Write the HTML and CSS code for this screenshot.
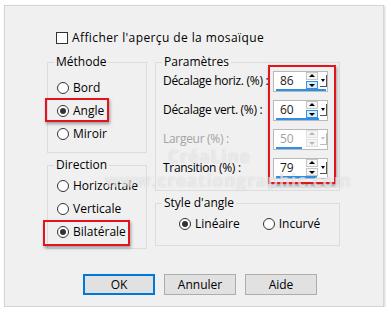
FILE: index.html
```html
<!DOCTYPE html>
<html lang="fr">
<head>
  <meta charset="UTF-8">
  <title>Mosaïque - Angle</title>
  <link rel="stylesheet" href="styles.css">
</head>
<body>
  <div class="dialog">
    <div class="preview">
      <span class="check"></span>
      <span class="preview-text">Afficher l'aperçu de la mosaïque</span>
    </div>

    <div class="columns">
      <div class="col">
        <fieldset class="group">
          <legend>Méthode</legend>
          <div class="body method">
            <div class="radio"><span class="dot"></span>Bord</div>
            <div class="radio on mark"><span class="dot"></span>Angle</div>
            <div class="radio"><span class="dot"></span>Miroir</div>
          </div>
        </fieldset>
        <fieldset class="group">
          <legend>Direction</legend>
          <div class="body direction">
            <div class="radio"><span class="dot"></span>Horizontale</div>
            <div class="radio"><span class="dot"></span>Verticale</div>
            <div class="radio on mark wide"><span class="dot"></span>Bilatérale</div>
          </div>
        </fieldset>
      </div>

      <div class="col">
        <fieldset class="group">
          <legend>Paramètres</legend>
          <div class="body params">
            <div class="labels">
              <div class="lbl">Décalage horiz. (%) :</div>
              <div class="lbl">Décalage vert. (%) :</div>
              <div class="lbl off">Largeur (%) :</div>
              <div class="lbl">Transition (%) :</div>
            </div>
            <div class="spins mark-box">
              <div class="spin">
                <div class="spin-row"><span class="val">86</span><span class="arrows"><i class="up"></i><i class="down hot"></i></span><span class="drop"></span></div>
                <div class="bar" style="width: 50px"></div>
              </div>
              <div class="spin">
                <div class="spin-row"><span class="val">60</span><span class="arrows"><i class="up"></i><i class="down hot"></i></span><span class="drop"></span></div>
                <div class="bar" style="width: 43px"></div>
              </div>
              <div class="spin disabled">
                <div class="spin-row"><span class="val">50</span><span class="arrows"><i class="up"></i><i class="down"></i></span><span class="drop"></span></div>
                <div class="bar" style="width: 26px"></div>
              </div>
              <div class="spin">
                <div class="spin-row"><span class="val">79</span><span class="arrows"><i class="up"></i><i class="down"></i></span><span class="drop"></span></div>
                <div class="bar" style="width: 41px"></div>
              </div>
            </div>
          </div>
        </fieldset>
        <fieldset class="group">
          <legend>Style d'angle</legend>
          <div class="body style">
            <div class="radio on"><span class="dot"></span>Linéaire</div>
            <div class="radio"><span class="dot"></span>Incurvé</div>
          </div>
        </fieldset>
      </div>
    </div>

    <div class="buttons">
      <button class="default">OK</button>
      <button>Annuler</button>
      <button>Aide</button>
    </div>

    <div class="wm wm-name">CréaLine</div>
    <div class="wm wm-url">www.creationgraphic.com</div>
  </div>
</body>
</html>
```

FILE: styles.css
```css
body { margin: 0; background: #fff; font-family: "Open Sans", "Noto Sans", sans-serif; font-size: 12px; color: #000; }

.dialog { position: relative; width: 380px; height: 302px; margin: 5px 0 0 4px; padding-left: 42px; box-sizing: border-box; background: #f0f0f0; border: 1px solid #d4d4d4; box-shadow: 1px 1px 2px rgba(0,0,0,.18); overflow: hidden; }

.preview { display: flex; align-items: center; gap: 4px; height: 12px; margin: 26px 0 0 9px; line-height: 12px; }
.preview-text { letter-spacing: .4px; }
.check { width: 10px; height: 10px; border: 1px solid #333; background: #fff; }

.columns { display: grid; grid-template-columns: 100px 185px; column-gap: 8px; margin-top: 10px; }
.col { display: flex; flex-direction: column; gap: 4px; }

.group { margin: 0; padding: 0; border: 1px solid #dcdcdc; min-width: 0; }
.group legend { margin-left: 6px; padding: 0 2px; line-height: 16px; }

.radio { position: relative; display: flex; align-items: center; gap: 4px; height: 23px; }
.dot { position: relative; width: 10px; height: 10px; border: 1px solid #333; border-radius: 50%; background: #fff; }
.radio.on .dot::after { content: ""; position: absolute; left: 2px; top: 2px; width: 6px; height: 6px; border-radius: 50%; background: #333; }

.method { padding: 6px 0 7px 9px; }
.direction { padding: 1px 0 5px 9px; }

/* annotations */
.mark::before { content: ""; position: absolute; left: -12px; top: -1px; width: 60px; height: 20px; border: 2px solid #e3141b; box-shadow: 1px 2px 3px rgba(0,0,0,.35); }
.mark.wide::before { left: -14px; width: 83px; top: 0; height: 22px; }
.mark-box { position: relative; }
.mark-box::after { content: ""; position: absolute; left: -5px; top: -6px; right: -8px; bottom: -5px; border: 2px solid #e3141b; box-shadow: 1px 2px 3px rgba(0,0,0,.35); }

.params { display: flex; padding: 1px 0 11px 7px; }
.labels { width: 110px; display: flex; flex-direction: column; gap: 8px; }
.lbl { height: 21px; line-height: 19px; white-space: nowrap; letter-spacing: -.3px; }
.lbl.off { color: #a3a3a3; }

.spins { display: flex; flex-direction: column; gap: 8px; }
.spin { width: 53px; height: 19px; border: 1px solid #b9b9b9; background: #fff; display: flex; flex-direction: column; }
.spin-row { flex: 1; display: flex; align-items: center; }
.val { width: 31px; padding-left: 6px; color: #1a1a1a; }
.arrows { display: flex; flex-direction: column; gap: 1px; }
.arrows i { position: relative; display: block; width: 10px; height: 6px; border: 1px solid #c6c6c6; background: #f4f4f4; }
.arrows i::after { content: ""; position: absolute; left: 2px; border-left: 3px solid transparent; border-right: 3px solid transparent; }
.arrows .up::after { top: 1px; border-bottom: 3px solid #000; }
.arrows .down::after { top: 2px; border-top: 3px solid #000; }
.arrows .hot { background: #d9ecfb; border-color: #3c8fd8; }
.drop { position: relative; width: 7px; height: 11px; margin-left: 2px; border-right: 1px solid #555; border-bottom: 1px solid #555; background: #fdfdfd; }
.drop::after { content: ""; position: absolute; left: 1px; top: 4px; border-left: 2.5px solid transparent; border-right: 2.5px solid transparent; border-top: 3px solid #000; }
.bar { height: 3px; margin-left: 2px; background: #2f8ee6; }

.spin.disabled .val { color: #a0a0a0; }
.spin.disabled .arrows i::after { border-bottom-color: #b5b5b5; border-top-color: #b5b5b5; }
.spin.disabled .arrows i { border-color: #e0e0e0; }
.spin.disabled .drop { border-color: #bdbdbd; }
.spin.disabled .drop::after { border-top-color: #c4c4c4; }

.style { display: flex; gap: 23px; padding: 1px 0 10px 23px; }

.buttons { display: flex; gap: 9px; margin: 25px 0 0 36px; }
.buttons button { width: 72px; height: 21px; padding: 0; font: inherit; color: #000; background: #e1e1e1; border: 1px solid #adadad; }
.buttons button.default { border-color: #0078d7; box-shadow: inset 0 0 0 1px #0078d7; }

.wm { position: absolute; color: rgba(255,255,255,.6); font-weight: bold; text-shadow: 0 0 1px rgba(120,120,120,.35); white-space: nowrap; pointer-events: none; }
.wm-name { left: 163px; top: 139px; font-size: 17px; letter-spacing: 1px; }
.wm-url { left: 100px; top: 163px; font-size: 17px; letter-spacing: 1px; }
```
